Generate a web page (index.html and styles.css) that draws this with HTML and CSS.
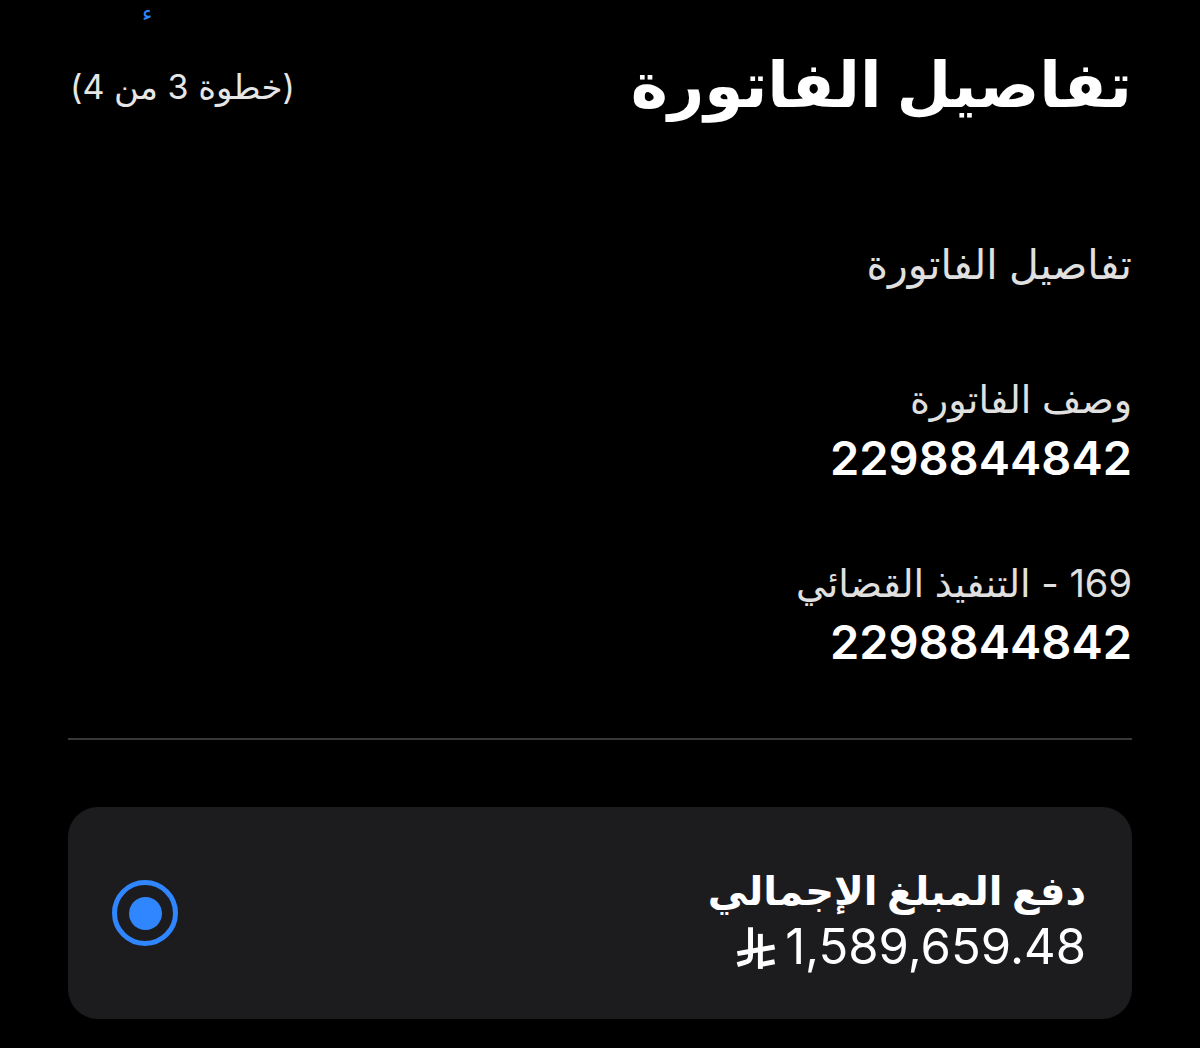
FILE: index.html
```html
<!DOCTYPE html>
<html lang="ar" dir="rtl">
<head>
  <meta charset="UTF-8" />
  <meta name="viewport" content="width=device-width, initial-scale=1.0" />
  <title>تفاصيل الفاتورة</title>
  <link rel="stylesheet" href="styles.css">
</head>
<body>

<div class="top-clip"><span>ء</span></div>

<div class="page">
  <header class="header">
    <h1>تفاصيل الفاتورة</h1>
    <div class="step">(خطوة 3 من 4)</div>
  </header>

  <h2 class="section-title">تفاصيل الفاتورة</h2>

  <div class="field">
    <div class="label">وصف الفاتورة</div>
    <div class="value">2298844842</div>
  </div>

  <div class="field">
    <div class="label">169 - التنفيذ القضائي</div>
    <div class="value">2298844842</div>
  </div>

  <hr class="divider" />

  <div class="pay-card">
    <div class="pay-info">
      <div class="pay-title">دفع المبلغ الإجمالي</div>
      <div class="pay-amount">
        <span dir="ltr">1,589,659.48</span>
        <svg class="riyal" viewBox="0 0 36 42" width="42" height="46" aria-label="ريال">
          <path d="M13 3 V29 Q13 34 8 35 L1 37" />
          <path d="M22 9 V41" />
          <path d="M1 27 L35 21" />
          <path d="M22 37 L35 34.5" />
        </svg>
      </div>
    </div>
    <div class="radio"><div class="radio-dot"></div></div>
  </div>
</div>

</body>
</html>
```

FILE: styles.css
```css
body {
  margin: 0;
  background-color: #000;
  color: #fff;
  font-family: "Inter", "DejaVu Sans", sans-serif;
}

.top-clip {
  height: 26px;
  direction: ltr;
  padding-left: 142px;
  color: #2f86ff;
  font-size: 22px;
  line-height: 26px;
}

.page {
  padding: 0 68px;
}

.header {
  display: flex;
  justify-content: space-between;
  align-items: center;
  margin-top: 8px;
}

h1 {
  margin: 0;
  font-size: 63px;
  font-weight: bold;
  line-height: 100px;
}

.step {
  font-size: 34px;
  color: #e6e6e6;
  margin-left: 2px;
  margin-top: 4px;
}

.section-title {
  margin: 100px 0 0 0;
  font-size: 41px;
  font-weight: normal;
  color: #e0e0e0;
  line-height: 60px;
}

.field {
  margin-top: 80px;
}

.field + .field {
  margin-top: 70px;
}

.label {
  font-size: 38px;
  color: #e0e0e0;
  line-height: 50px;
}

.value {
  font-size: 47px;
  font-weight: 600;
  line-height: 60px;
  margin-top: 4px;
}

.divider {
  border: none;
  border-top: 2px solid #38383a;
  margin: 66px 0 0 0;
}

.pay-card {
  margin-top: 67px;
  background-color: #1c1c1e;
  border-radius: 30px;
  height: 212px;
  box-sizing: border-box;
  display: flex;
  justify-content: space-between;
  align-items: center;
  padding: 12px 46px 0 44px;
}

.pay-title {
  font-size: 40px;
  font-weight: bold;
  line-height: 56px;
}

.pay-amount {
  display: flex;
  align-items: center;
  gap: 8px;
  font-size: 49px;
  line-height: 56px;
}

.riyal {
  fill: none;
  stroke: #fff;
  stroke-width: 4.5;
  stroke-linecap: butt;
  stroke-linejoin: round;
}

.radio {
  width: 56px;
  height: 56px;
  margin-top: -12px;
  border: 5.5px solid #2f86ff;
  border-radius: 50%;
  display: flex;
  align-items: center;
  justify-content: center;
}

.radio-dot {
  width: 33px;
  height: 33px;
  border-radius: 50%;
  background-color: #2f86ff;
}
```
